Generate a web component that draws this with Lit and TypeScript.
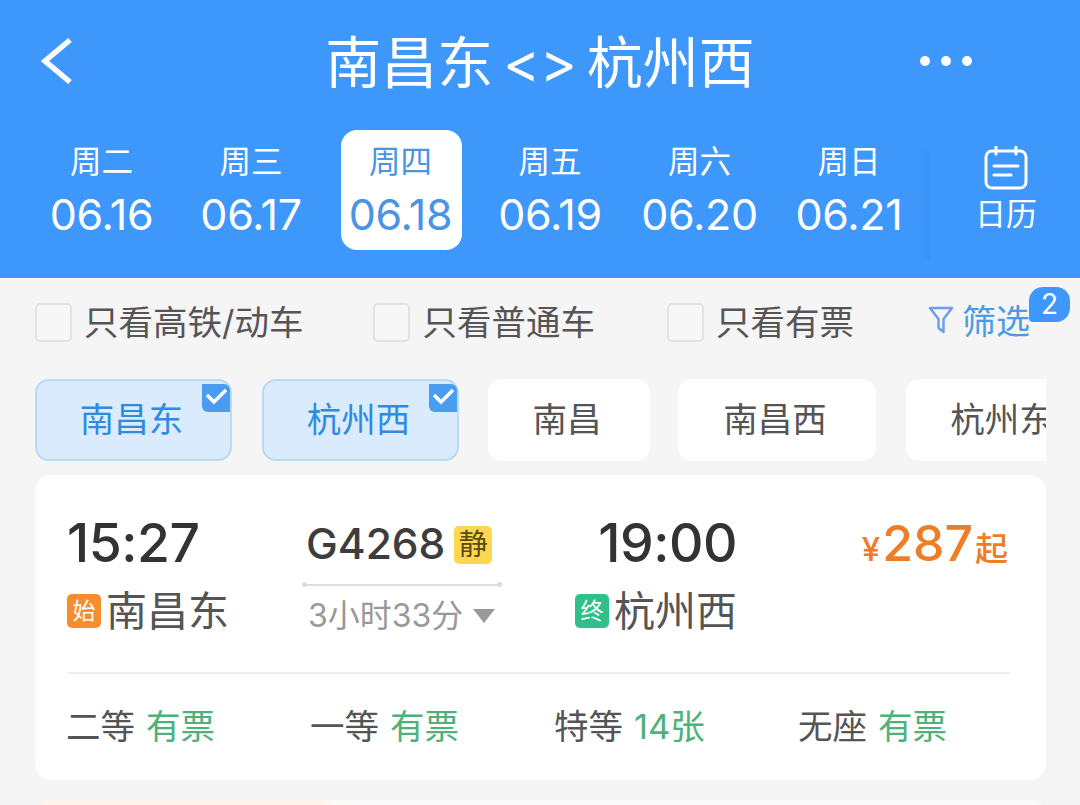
import { LitElement, html, css } from 'lit';
import { customElement } from 'lit/decorators.js';

const DATES = [
  { day: '周二', date: '06.16' },
  { day: '周三', date: '06.17' },
  { day: '周四', date: '06.18', active: true },
  { day: '周五', date: '06.19' },
  { day: '周六', date: '06.20' },
  { day: '周日', date: '06.21' },
];

const STATIONS = [
  { name: '南昌东', width: 197, gap: 30, on: true },
  { name: '杭州西', width: 197, gap: 29, on: true },
  { name: '南昌', width: 162, gap: 28 },
  { name: '南昌西', width: 198, gap: 30 },
  { name: '杭州东', width: 196, gap: 0 },
];

const SEATS = [
  { name: '二等', left: '有票' },
  { name: '一等', left: '有票' },
  { name: '特等', left: '14张' },
  { name: '无座', left: '有票' },
];

@customElement('app-root')
export class AppRoot extends LitElement {
  static override styles = css`
    :host {
      display: block;
      width: 1080px;
      height: 805px;
      overflow: hidden;
      background: #f5f5f5;
      font-family: 'Inter', 'Noto Sans CJK SC', sans-serif;
      color: #555;
    }
    .header {
      height: 278px;
      background: #3e97fb;
      color: #fff;
      box-sizing: border-box;
      padding-top: 28px;
    }
    .title-row {
      height: 66px;
      padding: 0 41px;
      display: grid;
      grid-template-columns: 1fr auto 1fr;
      align-items: center;
    }
    .back {
      width: 32px;
      height: 48px;
      display: block;
    }
    .title {
      height: 66px;
      font-size: 56px;
      line-height: 70px;
      font-weight: 400;
      word-spacing: -6px;
      white-space: nowrap;
    }
    .more {
      width: 52px;
      margin-left: 165px;
      display: flex;
      justify-content: space-between;
    }
    .more i {
      width: 10px;
      height: 10px;
      border-radius: 50%;
      background: #fff;
    }
    .date-row {
      margin-top: 36px;
      padding-left: 42px;
      display: flex;
      align-items: flex-start;
    }
    .date {
      width: 121px;
      height: 120px;
      margin-right: 28.5px;
      flex: none;
      border-radius: 16px;
      display: flex;
      flex-direction: column;
      align-items: center;
      box-sizing: border-box;
      padding: 12px 2px 0 0;
    }
    .date.active {
      background: #fff;
      color: #4a94e2;
    }
    .date .day {
      font-size: 31.5px;
      line-height: 40px;
    }
    .date .num {
      font-size: 43px;
      line-height: 54px;
      margin-top: 5px;
      letter-spacing: -0.3px;
      white-space: nowrap;
    }
    .calendar {
      position: relative;
      flex: none;
      width: 100px;
      margin-left: 17px;
      padding-top: 16px;
      display: flex;
      flex-direction: column;
      align-items: center;
    }
    .calendar::before {
      content: '';
      position: absolute;
      left: -36px;
      top: 20px;
      width: 10px;
      height: 110px;
      background: linear-gradient(90deg, rgba(60, 140, 235, 0), #3b93f6);
    }
    .calendar svg {
      display: block;
    }
    .calendar span {
      font-size: 31px;
      line-height: 40px;
      margin-top: 4px;
    }
    .filters {
      height: 101px;
      display: flex;
      align-items: center;
      box-sizing: border-box;
      padding: 0 0 18px 35px;
      font-size: 34.5px;
    }
    .check {
      display: flex;
      align-items: center;
      gap: 12px;
      white-space: nowrap;
    }
    .box {
      width: 37px;
      height: 39px;
      margin-top: 5px;
      box-sizing: border-box;
      border: 2px solid #e2e2e2;
      border-radius: 5px;
      background: #f7f7f7;
    }
    .filter-btn {
      position: relative;
      display: flex;
      align-items: center;
      gap: 8px;
      font-size: 34px;
      color: #4a9ae8;
    }
    .badge {
      position: absolute;
      right: -40px;
      top: -8px;
      width: 41px;
      height: 35px;
      border-radius: 14px 14px 14px 4px;
      background: #3e97fb;
      color: #fff;
      font-size: 28px;
      line-height: 35px;
      text-align: center;
    }
    .stations {
      margin-left: 35px;
      width: 1011px;
      height: 82px;
      display: flex;
      overflow: hidden;
    }
    .chip {
      position: relative;
      flex: none;
      height: 82px;
      box-sizing: border-box;
      padding: 0 4px 6px 0;
      border-radius: 14px;
      background: #fff;
      font-size: 34.5px;
      display: flex;
      align-items: center;
      justify-content: center;
    }
    .chip.on {
      background: #d9ebfd;
      border: 2px solid #bcd9f3;
      color: #2f8be0;
    }
    .tick {
      position: absolute;
      right: 0;
      top: 3px;
      width: 28px;
      height: 28px;
      background: #4a9cf0;
      border-radius: 0 6px 0 6px;
    }
    .tick svg {
      display: block;
    }
    .card {
      margin: 14px 34px 0 35px;
      height: 305px;
      box-sizing: border-box;
      background: #fff;
      border-radius: 16px;
      padding: 0 36px 0 32px;
    }
    .train {
      height: 199px;
      display: grid;
      grid-template-columns: 235px 266px 1fr auto;
      box-sizing: border-box;
      padding-top: 36px;
      border-bottom: 2px solid #efefef;
    }
    .time {
      font-size: 53.5px;
      line-height: 64px;
      font-weight: 500;
      color: #333;
      letter-spacing: -0.5px;
    }
    .place {
      display: flex;
      align-items: center;
      gap: 5px;
      font-size: 41px;
      line-height: 52px;
      margin-top: 10px;
      white-space: nowrap;
    }
    .tag {
      width: 34px;
      height: 34px;
      border-radius: 5px;
      color: #fff;
      font-size: 23px;
      line-height: 34px;
      text-align: center;
    }
    .tag.start {
      background: #f78d2e;
    }
    .tag.end {
      background: #2fc089;
    }
    .middle {
      width: 200px;
    }
    .no {
      height: 64px;
      display: flex;
      align-items: center;
      gap: 9px;
      padding-left: 4px;
      font-size: 42.5px;
      font-weight: 500;
      color: #3d3d3d;
      white-space: nowrap;
    }
    .quiet {
      width: 38px;
      height: 38px;
      margin-top: 4px;
      border-radius: 5px;
      background: #fbd84f;
      font-size: 29px;
      font-weight: 400;
      line-height: 38px;
      text-align: center;
      color: #5a4a10;
    }
    .line {
      position: relative;
      margin-top: 9px;
      height: 2px;
      background: #ddd;
    }
    .line::before,
    .line::after {
      content: '';
      position: absolute;
      top: -2px;
      width: 5px;
      height: 5px;
      border-radius: 50%;
      background: #ddd;
    }
    .line::before {
      left: 0;
    }
    .line::after {
      right: 0;
    }
    .length {
      margin-top: 8px;
      display: flex;
      align-items: center;
      gap: 10px;
      padding-left: 6px;
      font-size: 32px;
      line-height: 44px;
      color: #999;
      white-space: nowrap;
    }
    .caret {
      width: 0;
      height: 0;
      border-left: 11px solid transparent;
      border-right: 11px solid transparent;
      border-top: 14px solid #999;
    }
    .arrive {
      display: flex;
      flex-direction: column;
      align-items: flex-end;
      width: 169px;
    }
    .price {
      color: #ee7d26;
      display: flex;
      align-items: baseline;
      font-size: 33px;
      font-weight: 500;
      line-height: 64px;
      margin-right: 2px;
      white-space: nowrap;
    }
    .price b {
      font-weight: 500;
      font-size: 50px;
      margin: 0 2px;
    }
    .seats {
      display: grid;
      grid-template-columns: repeat(4, 244px);
      margin-left: -1px;
      padding-top: 25px;
      font-size: 34.5px;
      line-height: 56px;
    }
    .seat {
      display: flex;
      gap: 11px;
      white-space: nowrap;
    }
    .seat em {
      font-style: normal;
      color: #4db27a;
    }
    .next {
      margin: 20px 34px 0 35px;
      height: 40px;
      border-radius: 16px 16px 0 0;
      background: linear-gradient(90deg, #fef6ee 0, #fef6ee 280px, #fafafa 310px);
    }
  `;

  override render() {
    return html`
      <div class="header">
        <div class="title-row">
          <svg class="back" viewBox="0 0 32 48">
            <path d="M29 3 L4 24 L29 45" fill="none" stroke="#fff" stroke-width="5.5" />
          </svg>
          <div class="title">南昌东 &lt;&gt; 杭州西</div>
          <div class="more"><i></i><i></i><i></i></div>
        </div>
        <div class="date-row">
          ${DATES.map(
            (d) => html`
              <div class="date ${d.active ? 'active' : ''}">
                <span class="day">${d.day}</span>
                <span class="num">${d.date}</span>
              </div>
            `
          )}
          <div class="calendar">
            <svg width="44" height="44" viewBox="0 0 44 44" fill="none" stroke="#fff" stroke-width="3">
              <rect x="2" y="5" width="40" height="37" rx="6" />
              <path d="M12 1 V8 M32 1 V8" stroke-linecap="round" />
              <path d="M10 20 H34 M10 29 H27" stroke-linecap="round" />
            </svg>
            <span>日历</span>
          </div>
        </div>
      </div>

      <div class="filters">
        <label class="check"><span class="box"></span>只看高铁/动车</label>
        <label class="check" style="margin-left:70px"><span class="box"></span>只看普通车</label>
        <label class="check" style="margin-left:72px"><span class="box"></span>只看有票</label>
        <div class="filter-btn" style="margin-left:74px">
          <svg width="26" height="30" viewBox="0 0 26 30" fill="none" stroke="#6d9ff0" stroke-width="2.5">
            <path d="M2 3 H24 L15.5 14 V27 L10.5 23 V14 Z" stroke-linejoin="round" />
          </svg>
          筛选
          <span class="badge">2</span>
        </div>
      </div>

      <div class="stations">
        ${STATIONS.map(
          (s) => html`
            <div
              class="chip ${s.on ? 'on' : ''}"
              style="width:${s.width}px;margin-right:${s.gap}px"
            >
              ${s.name}
              ${s.on
                ? html`<span class="tick">
                    <svg width="28" height="28" viewBox="0 0 28 28" fill="none" stroke="#fff" stroke-width="3.5">
                      <path d="M5 11 L12 18 L24 6" />
                    </svg>
                  </span>`
                : ''}
            </div>
          `
        )}
      </div>

      <div class="card">
        <div class="train">
          <div>
            <div class="time">15:27</div>
            <div class="place"><span class="tag start">始</span>南昌东</div>
          </div>
          <div class="middle">
            <div class="no">G4268<span class="quiet">静</span></div>
            <div class="line"></div>
            <div class="length">3小时33分<span class="caret"></span></div>
          </div>
          <div class="arrive">
            <div class="time">19:00</div>
            <div class="place"><span class="tag end">终</span>杭州西</div>
          </div>
          <div class="price">¥<b>287</b>起</div>
        </div>
        <div class="seats">
          ${SEATS.map(
            (s) => html`<div class="seat">${s.name}<em>${s.left}</em></div>`
          )}
        </div>
      </div>
      <div class="next"></div>
    `;
  }
}
